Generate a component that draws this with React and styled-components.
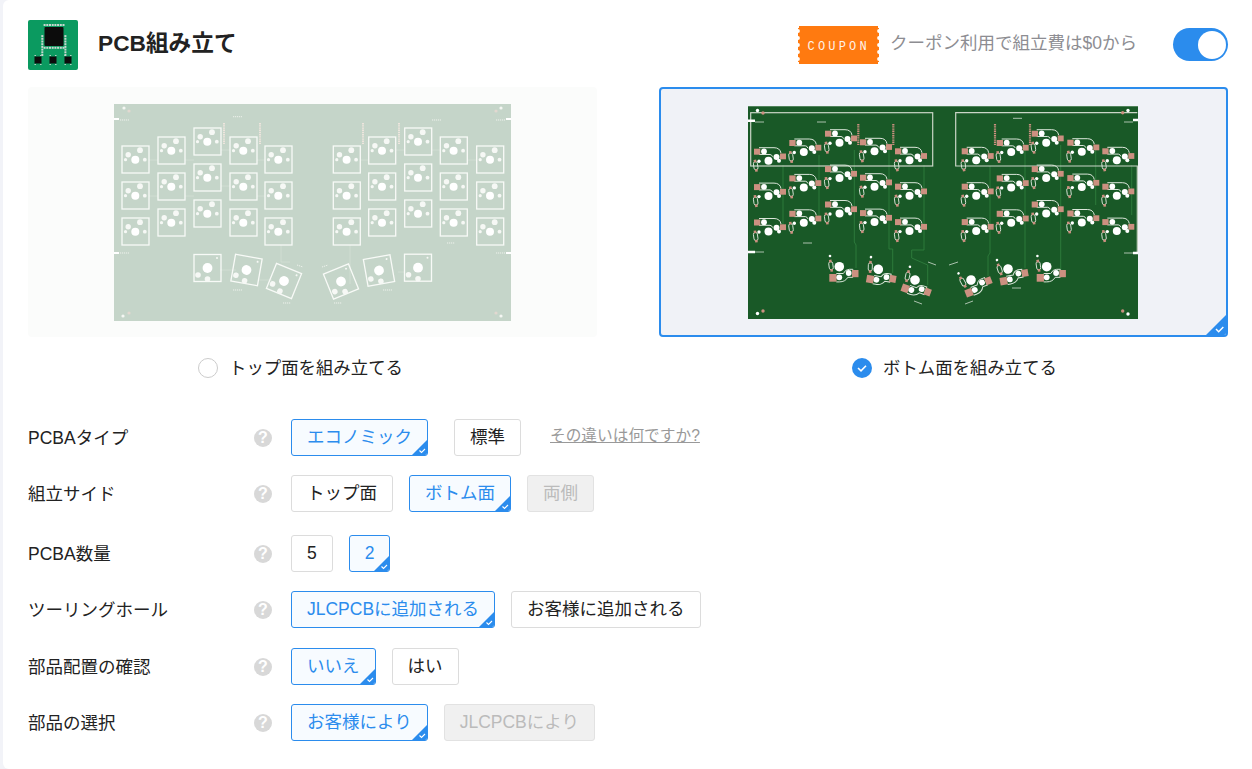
import styled, { createGlobalStyle } from "styled-components";

const GlobalStyle = createGlobalStyle`
  body {
    margin: 0;
    background: #f2f3f8;
    font-family: "Liberation Sans", "Noto Sans CJK JP", sans-serif;
    color: #222;
  }
`;

const Card = styled.main`
  margin-left: 3px;
  min-height: 100vh;
  box-sizing: border-box;
  padding: 20px 24px 28px 25px;
  background: #fff;
  border-radius: 6px 0 0 6px;
`;

const Header = styled.header`
  display: flex;
  align-items: center;
  height: 50px;
`;

const Title = styled.h1`
  margin: 0 0 2px 20px;
  font-size: 22.7px;
  line-height: 1.2;
  font-weight: 700;
  flex: 1;
`;

const CouponText = styled.span`
  margin: 0 0 3px 11px;
  font-size: 17.5px;
  line-height: 1.2;
  color: #8d8d92;
`;

const Toggle = styled.div`
  display: flex;
  justify-content: flex-end;
  align-items: center;
  width: 55px;
  height: 33px;
  margin: 0 0 1px 36px;
  padding: 0 2px;
  box-sizing: border-box;
  border-radius: 17px;
  background: #2b8ced;
`;

const Knob = styled.span`
  width: 28px;
  height: 28px;
  border-radius: 50%;
  background: #fff;
`;

const Sides = styled.section`
  display: grid;
  grid-template-columns: 1fr 1fr;
  column-gap: 62px;
  margin-top: 17px;
`;

const Panel = styled.div`
  position: relative;
  display: flex;
  align-items: center;
  justify-content: center;
  height: 250px;
  box-sizing: border-box;
  border-radius: 4px;
  overflow: hidden;
  background: ${(props) => (props.$active ? "#f0f2f7" : "#fbfcfb")};
  border: ${(props) => (props.$active ? "2px solid #2b8ced" : "none")};
  padding-right: ${(props) => (props.$active ? "1px" : "0")};
`;

const Board = styled.svg`
  display: block;
  width: ${(props) => props.$w}px;
  height: ${(props) => props.$h}px;
  filter: blur(0.25px);
`;

const RadioRow = styled.label`
  display: flex;
  align-items: center;
  gap: ${(props) => props.$gap}px;
  height: 20px;
  margin-top: 21px;
  padding-left: ${(props) => props.$inset}px;
  font-size: 17.4px;
  line-height: 20px;
`;

const RadioOff = styled.span`
  width: 20px;
  height: 20px;
  box-sizing: border-box;
  border: 1px solid #ccc;
  border-radius: 50%;
`;

const RadioOn = styled.svg`
  width: 20px;
  height: 20px;
`;

const Options = styled.section`
  display: flex;
  flex-direction: column;
  margin-top: 41px;
`;

const Row = styled.div`
  display: grid;
  grid-template-columns: 226px 37px 1fr;
  align-items: center;
  height: 37px;
  margin-top: ${(props) => props.$top || 0}px;
`;

const Label = styled.span`
  font-size: 17.5px;
  line-height: 20px;
  padding-top: 1px;
`;

const Help = styled.span`
  display: flex;
  align-items: center;
  justify-content: center;
  width: 18px;
  height: 18px;
  border-radius: 50%;
  background: #d8d8d8;
  color: #fff;
  font-size: 16px;
  font-weight: 700;
`;

const Choices = styled.div`
  display: flex;
  align-items: center;
  gap: 16px;
`;

const Choice = styled.div`
  position: relative;
  display: flex;
  align-items: center;
  height: 37px;
  box-sizing: border-box;
  padding: 0 15px 2px;
  margin-left: ${(props) => props.$shift || 0}px;
  border-radius: 3px;
  overflow: hidden;
  font-size: 17.5px;
  line-height: 20px;
  white-space: nowrap;
  border: 1px solid ${(props) =>
    props.$selected ? "#2b8ced" : props.$disabled ? "#e2e2e2" : "#dcdcdc"};
  background: ${(props) =>
    props.$selected ? "#f7fbff" : props.$disabled ? "#f0f0f0" : "#fff"};
  color: ${(props) =>
    props.$selected ? "#2b8ced" : props.$disabled ? "#bbb" : "#222"};
`;

const Mark = styled.svg`
  position: absolute;
  right: 0;
  bottom: 0;
`;

const DiffLink = styled.a`
  margin-left: 13px;
  padding-bottom: 3px;
  font-size: 15.7px;
  line-height: 18px;
  color: #999;
  text-decoration: underline;
`;

const CornerMark = ({ size = 15 }) => (
  <Mark width={size} height={size} viewBox="0 0 15 15">
    <polygon points="15,0 15,15 0,15" fill="#2b8ced" />
    <polyline points="7.5,10.5 9.5,12.5 13,9" fill="none" stroke="#fff" strokeWidth="1.1" />
  </Mark>
);

const Logo = () => {
  const dots = [];
  for (let i = 0; i < 8; i++) {
    const p = 16.6 + i * 2.7;
    dots.push([p, 5], [p, 27.8], [14.3, p - 0.5], [37.4, p - 0.5]);
  }
  return (
    <svg width="50" height="50" viewBox="0 0 50 50">
      <rect width="50" height="50" rx="2" fill="#0b9a60" />
      {dots.map(([x, y], i) => (
        <rect key={i} x={x - 1} y={y - 1} width="2" height="2" fill="#c9d6cf" />
      ))}
      <rect x="16.5" y="7" width="19" height="19" rx="1" fill="#0c0c0c" />
      {[10, 25, 40].map((x) => (
        <g key={x}>
          <rect x={x - 3.5} y="36.5" width="7" height="7" fill="#0c0c0c" />
          <rect x={x - 3.5} y="44" width="1.4" height="1" fill="#c9d6cf" />
          <rect x={x + 2.1} y="44" width="1.4" height="1" fill="#c9d6cf" />
          <rect x={x - 3.5} y="35" width="1.4" height="1" fill="#c9d6cf" />
          <rect x={x + 2.1} y="35" width="1.4" height="1" fill="#c9d6cf" />
        </g>
      ))}
    </svg>
  );
};

const Coupon = () => {
  const bites = [4, 11, 18, 25, 32];
  return (
    <svg width="81" height="38" viewBox="0 0 81 38" style={{ flexShrink: 0 }}>
      <rect x="1" width="79" height="38" fill="#ff7a10" />
      <rect x="0" y="2" width="81" height="34" fill="#ff7a10" />
      {bites.map((y) => (
        <g key={y}>
          <circle cx="0" cy={y + 1} r="1.9" fill="#fff" />
          <circle cx="81" cy={y + 1} r="1.9" fill="#fff" />
        </g>
      ))}
      <text
        x="9.5"
        y="23.5"
        fontFamily="Liberation Mono"
        fontSize="12"
        letterSpacing="3.2"
        fill="#fff3e8"
      >
        COUPON
      </text>
    </svg>
  );
};

// key columns, page coordinates of the screenshot
const topCols = [
  [122, 146], [158, 137], [194, 128], [230, 137], [265, 146],
  [333.3, 146], [368.7, 137], [404.7, 128], [440.3, 137], [476.7, 146],
];
const topThumbs = [
  [207.5, 268, 0], [246.5, 270, 10], [284, 281, 22],
  [341, 281.5, -22], [379, 270.5, -10], [418, 267.7, 0],
];

const TopKey = ({ x, y }) => (
  <g transform={`translate(${x} ${y})`}>
    <rect width="27" height="27" fill="none" stroke="#f8faf7" strokeWidth="1.3" />
    <circle cx="13.3" cy="13.7" r="4" fill="#fff" />
    <circle cx="6.2" cy="8.8" r="2.7" fill="#f6f8f5" />
    <circle cx="18" cy="4.2" r="2.9" fill="#f6f8f5" />
    <circle cx="22.8" cy="13.7" r="1.9" fill="#f6f8f5" />
    <circle cx="3.5" cy="13.7" r="1.6" fill="#f6f8f5" />
  </g>
);

const TopThumb = ({ x, y, a }) => (
  <g transform={`translate(${x} ${y}) rotate(${a})`}>
    <rect x="-13.5" y="-13.5" width="27" height="27" fill="none" stroke="#f8faf7" strokeWidth="1.3" />
    <circle cx="0" cy="0" r="4.9" fill="#fff" />
    <circle cx="-9.5" cy="7" r="2.8" fill="#f6f8f5" />
    <circle cx="0" cy="11" r="2.8" fill="#f6f8f5" />
    <circle cx="9.5" cy="-10" r="1" fill="#f6f8f5" />
  </g>
);

const TopBoard = () => {
  const keys = [];
  topCols.forEach(([x, y]) => {
    for (let r = 0; r < 3; r++) keys.push([x, y + r * 36]);
  });
  return (
    <Board $w={397} $h={217} viewBox="114 104 397 217">
      <rect x="114" y="104" width="397" height="217" fill="#c5d5c9" />
      <path
        d="M149 160H158M185 160H194M221 150H230M149 196H158M185 196H194M221 186H230M257 160H265M257 196H265M281 245V262H290M220 270H236M258 280H272M360 160H369M396 150H405M432 150H441M468 160H476M350 245V284M398 272H405"
        fill="none"
        stroke="#d5e2d6"
        strokeWidth="0.7"
      />
      {keys.map(([x, y], i) => (
        <TopKey key={i} x={x} y={y} />
      ))}
      {topThumbs.map(([x, y, a], i) => (
        <TopThumb key={i} x={x} y={y} a={a} />
      ))}
      {[224, 260, 363, 399].map((x) => (
        <line key={x} x1={x} x2={x} y1="123" y2="144" stroke="#eee5dd" strokeWidth="2" strokeDasharray="1.4 0.8" />
      ))}
      <path
        d="M233 116.7H242M432 120H441M120 120H129M120 253H129M496 120H505M496 253H505M233 290H242M283 303H291M334 303H342M383 290H392M297 265L303 267M322 267L328 265M447 243H455"
        stroke="#eef2ec"
        strokeWidth="1"
        strokeDasharray="1.2 0.8"
      />
      <path d="M114 119H119M114 253H119M506 119H511M506 253H511" stroke="#fff" strokeWidth="2" />
      {[[124, 108], [501, 108], [123, 316], [501, 316]].map(([x, y]) => (
        <circle key={`${x}${y}`} cx={x} cy={y} r="1.6" fill="#f5f7f3" />
      ))}
      {[[129, 111], [496, 111], [129, 313], [496, 313]].map(([x, y]) => (
        <circle key={`${x}${y}`} cx={x} cy={y} r="1.6" fill="#e2d8d0" />
      ))}
    </Board>
  );
};

const pad = "#cc9080";
const hole = "#fff";
const line = "#dbe6da";

const bottomCols = [
  [754, 148.7], [789.3, 140], [825, 130.7], [860, 139.3], [895, 148.3],
  [961.7, 148.3], [996.7, 140], [1031.7, 130.7], [1067.3, 139.7], [1102.3, 148.3],
];
const bottomThumbs = [
  [839.3, 266.7, 0], [878.3, 269.3, 10], [915, 280, 20],
  [971, 280, -21], [1008, 269, -10], [1046.7, 266.7, 0],
];

const Diode = ({ x, y }) => (
  <g transform={`translate(${x} ${y}) rotate(-8)`}>
    <rect x="-2" y="-4" width="4" height="8" rx="1.8" fill="none" stroke={line} strokeWidth="0.9" />
    <rect x="-1.3" y="-6" width="2.6" height="2.6" fill={pad} />
    <rect x="-1.3" y="3.4" width="2.6" height="2.6" fill={pad} />
  </g>
);

const BottomKey = ({ x, y }) => (
  <g transform={`translate(${x} ${y})`}>
    <path
      d="M5 -1H20Q26 -1 27 4.5M5 5.8H16Q18 6 18.5 8"
      fill="none"
      stroke={line}
      strokeWidth="1"
    />
    <rect x="0" y="0" width="6.3" height="6" fill={pad} />
    <rect x="26" y="4.8" width="6" height="5.8" fill={pad} />
    <circle cx="10" cy="2.7" r="2.9" fill={hole} />
    <circle cx="14.5" cy="12" r="4" fill={hole} />
    <circle cx="22.5" cy="8.2" r="3" fill={hole} />
    <circle cx="25" cy="12" r="2" fill={hole} />
    <circle cx="5" cy="12.5" r="1.7" fill={hole} />
    <Diode x={1.7} y={17} />
  </g>
);

const BottomThumb = ({ x, y, a }) => (
  <g transform={`translate(${x} ${y}) rotate(${a})`}>
    <path
      d="M-3 6.8H4Q6 2.6 10 2.6H13.5V10.6H8.5Q6 15.2 0 15.2H-3"
      fill="none"
      stroke={line}
      strokeWidth="1"
    />
    <rect x="-10" y="7.3" width="7.3" height="7.7" fill={pad} />
    <rect x="12.8" y="3.3" width="6.4" height="7.2" fill={pad} />
    <circle cx="0" cy="0" r="4.8" fill={hole} />
    <circle cx="0" cy="10.6" r="2.9" fill={hole} />
    <circle cx="9.4" cy="6.3" r="2.9" fill={hole} />
    <circle cx="-9.3" cy="-10.7" r="1.3" fill={hole} />
    <Diode x={-8.3} y={-1} />
  </g>
);

const BottomBoard = () => {
  const keys = [];
  bottomCols.forEach(([x, y]) => {
    for (let r = 0; r < 3; r++) keys.push([x, y + r * 35.4]);
  });
  return (
    <Board $w={390} $h={213} viewBox="748 106 390 213">
      <rect x="748" y="106" width="390" height="213" fill="#195927" />
      <line x1="748" x2="1138" y1="106.3" y2="106.3" stroke="#5f8f68" strokeWidth="1" />
      <path
        d="M783 165V226M819 155V220M854.3 150V242L856 245V268M889 150V249H892.7V273M924 165V250H911.7V258L927.7 265V285M990 166V253L988 256V276M1025 150V268M1060.7 145V270M1095.7 150V205M1131.7 165V215"
        fill="none"
        stroke="#2f7d3d"
        strokeWidth="0.9"
      />
      <rect x="750.7" y="112.7" width="182" height="53.3" fill="none" stroke="#cad5c7" strokeWidth="1.2" />
      <path d="M1137.3 112.7H955.7V166H1137.3V252" fill="none" stroke="#cad5c7" strokeWidth="1.2" />
      {[858.3, 893.3, 995, 1030].map((x) => (
        <line key={x} x1={x} x2={x} y1="124" y2="145" stroke={pad} strokeWidth="2.2" strokeDasharray="1.4 0.8" />
      ))}
      {keys.map(([x, y], i) => (
        <BottomKey key={i} x={x} y={y} />
      ))}
      {bottomThumbs.map(([x, y, a], i) => (
        <BottomThumb key={i} x={x} y={y} a={a} />
      ))}
      <path
        d="M928 262L936 265M949 265L958 262M914 301L922 304M965 304L973 301M817 122H826M1013 118.3H1022M803 243H812M1012 288H1021M755 122H764M755 252H764M1124 122H1133M1124 253H1133"
        stroke="#cfdccf"
        strokeWidth="0.8"
      />
      <path d="M748 120.7H755M748 252H755M1133 120H1138M1133 253H1138" stroke="#fff" strokeWidth="2.4" />
      {[[757.5, 110.5], [1128, 110.5], [757.5, 313.5], [1128, 314]].map(([x, y]) => (
        <circle key={`${x}${y}`} cx={x} cy={y} r="1.7" fill="#fff" />
      ))}
      {[[763, 113], [1122.7, 112.7], [763, 311], [1122.7, 311]].map(([x, y]) => (
        <circle key={`${x}${y}`} cx={x} cy={y} r="1.7" fill={pad} />
      ))}
    </Board>
  );
};

const options = [
  {
    label: "PCBAタイプ",
    choices: [
      { text: "エコノミック", selected: true },
      { text: "標準", shift: 10 },
    ],
    link: "その違いは何ですか?",
  },
  {
    label: "組立サイド",
    top: 19,
    choices: [
      { text: "トップ面" },
      { text: "ボトム面", selected: true },
      { text: "両側", disabled: true },
    ],
  },
  {
    label: "PCBA数量",
    top: 23,
    choices: [{ text: "5" }, { text: "2", selected: true }],
  },
  {
    label: "ツーリングホール",
    top: 19,
    choices: [
      { text: "JLCPCBに追加される", selected: true },
      { text: "お客様に追加される" },
    ],
  },
  {
    label: "部品配置の確認",
    top: 20,
    choices: [{ text: "いいえ", selected: true }, { text: "はい" }],
  },
  {
    label: "部品の選択",
    top: 19,
    choices: [
      { text: "お客様により", selected: true },
      { text: "JLCPCBにより", disabled: true },
    ],
  },
];

export default function App() {
  return (
    <>
      <GlobalStyle />
      <Card>
        <Header>
          <Logo />
          <Title>PCB組み立て</Title>
          <Coupon />
          <CouponText>クーポン利用で組立費は$0から</CouponText>
          <Toggle>
            <Knob />
          </Toggle>
        </Header>

        <Sides>
          <div>
            <Panel>
              <TopBoard />
            </Panel>
            <RadioRow $inset={170} $gap={11}>
              <RadioOff />
              トップ面を組み立てる
            </RadioRow>
          </div>
          <div>
            <Panel $active>
              <BottomBoard />
              <CornerMark size={20} />
            </Panel>
            <RadioRow $inset={193} $gap={11}>
              <RadioOn viewBox="0 0 20 20">
                <circle cx="10" cy="10" r="10" fill="#2b8ced" />
                <polyline points="6,10 9,12.8 14,7.8" fill="none" stroke="#fff" strokeWidth="1.6" />
              </RadioOn>
              ボトム面を組み立てる
            </RadioRow>
          </div>
        </Sides>

        <Options>
          {options.map((opt) => (
            <Row key={opt.label} $top={opt.top}>
              <Label>{opt.label}</Label>
              <Help>?</Help>
              <Choices>
                {opt.choices.map((c) => (
                  <Choice
                    key={c.text}
                    $selected={c.selected}
                    $disabled={c.disabled}
                    $shift={c.shift}
                  >
                    {c.text}
                    {c.selected && <CornerMark />}
                  </Choice>
                ))}
                {opt.link && <DiffLink>{opt.link}</DiffLink>}
              </Choices>
            </Row>
          ))}
        </Options>
      </Card>
    </>
  );
}
